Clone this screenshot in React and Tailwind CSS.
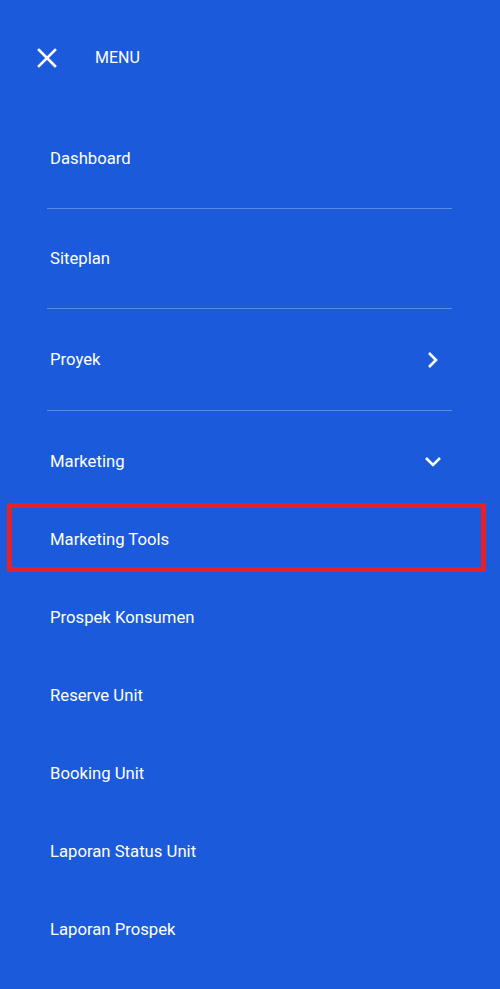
const items = ['Prospek Konsumen', 'Reserve Unit', 'Booking Unit', 'Laporan Status Unit', 'Laporan Prospek'];

const App = () => {
    return (
        <div className="min-h-[989px] w-[500px] bg-[#1a5adb] text-white font-['Roboto',sans-serif] text-[16.7px] overflow-hidden">
            <div className="h-[109px] flex items-center pl-[37px] pt-[7px]">
                <svg width="20" height="20" viewBox="0 0 20 20" className="shrink-0">
                    <path d="M2 2 L18 18 M18 2 L2 18" stroke="white" strokeWidth="2.6" strokeLinecap="square" />
                </svg>
                <span className="ml-[38px] text-base">MENU</span>
            </div>

            <div className="mx-[47px] mr-[48px]">
                <div className="h-[100px] flex items-center pl-[3px] border-b border-[#5a89e6]">Dashboard</div>
                <div className="h-[100px] flex items-center pl-[3px] border-b border-[#5a89e6]">Siteplan</div>
                <div className="h-[102px] flex items-center justify-between pl-[3px] pr-[12px] border-b border-[#5a89e6]">
                    <span>Proyek</span>
                    <svg width="14" height="18" viewBox="0 0 14 18">
                        <path d="M3 2 L10 9 L3 16" fill="none" stroke="white" strokeWidth="2.6" />
                    </svg>
                </div>
                <div className="h-[89px] pt-[13px] flex items-center justify-between pl-[3px] pr-[10px]">
                    <span>Marketing</span>
                    <svg width="18" height="14" viewBox="0 0 18 14">
                        <path d="M2 3 L9 10 L16 3" fill="none" stroke="white" strokeWidth="2.6" />
                    </svg>
                </div>
            </div>

            <div className="h-[78px] pt-[3px]">
                <div className="ml-[7px] w-[479px] h-[69px] border-[5px] border-[#e8202a] flex items-center pl-[38px] pt-[4px]">
                    Marketing Tools
                </div>
            </div>
            {items.map((item) => (
                <div key={item} className="h-[78px] flex items-center pl-[50px] pt-[2px]">
                    {item}
                </div>
            ))}
        </div>
    );
};

export default App;
